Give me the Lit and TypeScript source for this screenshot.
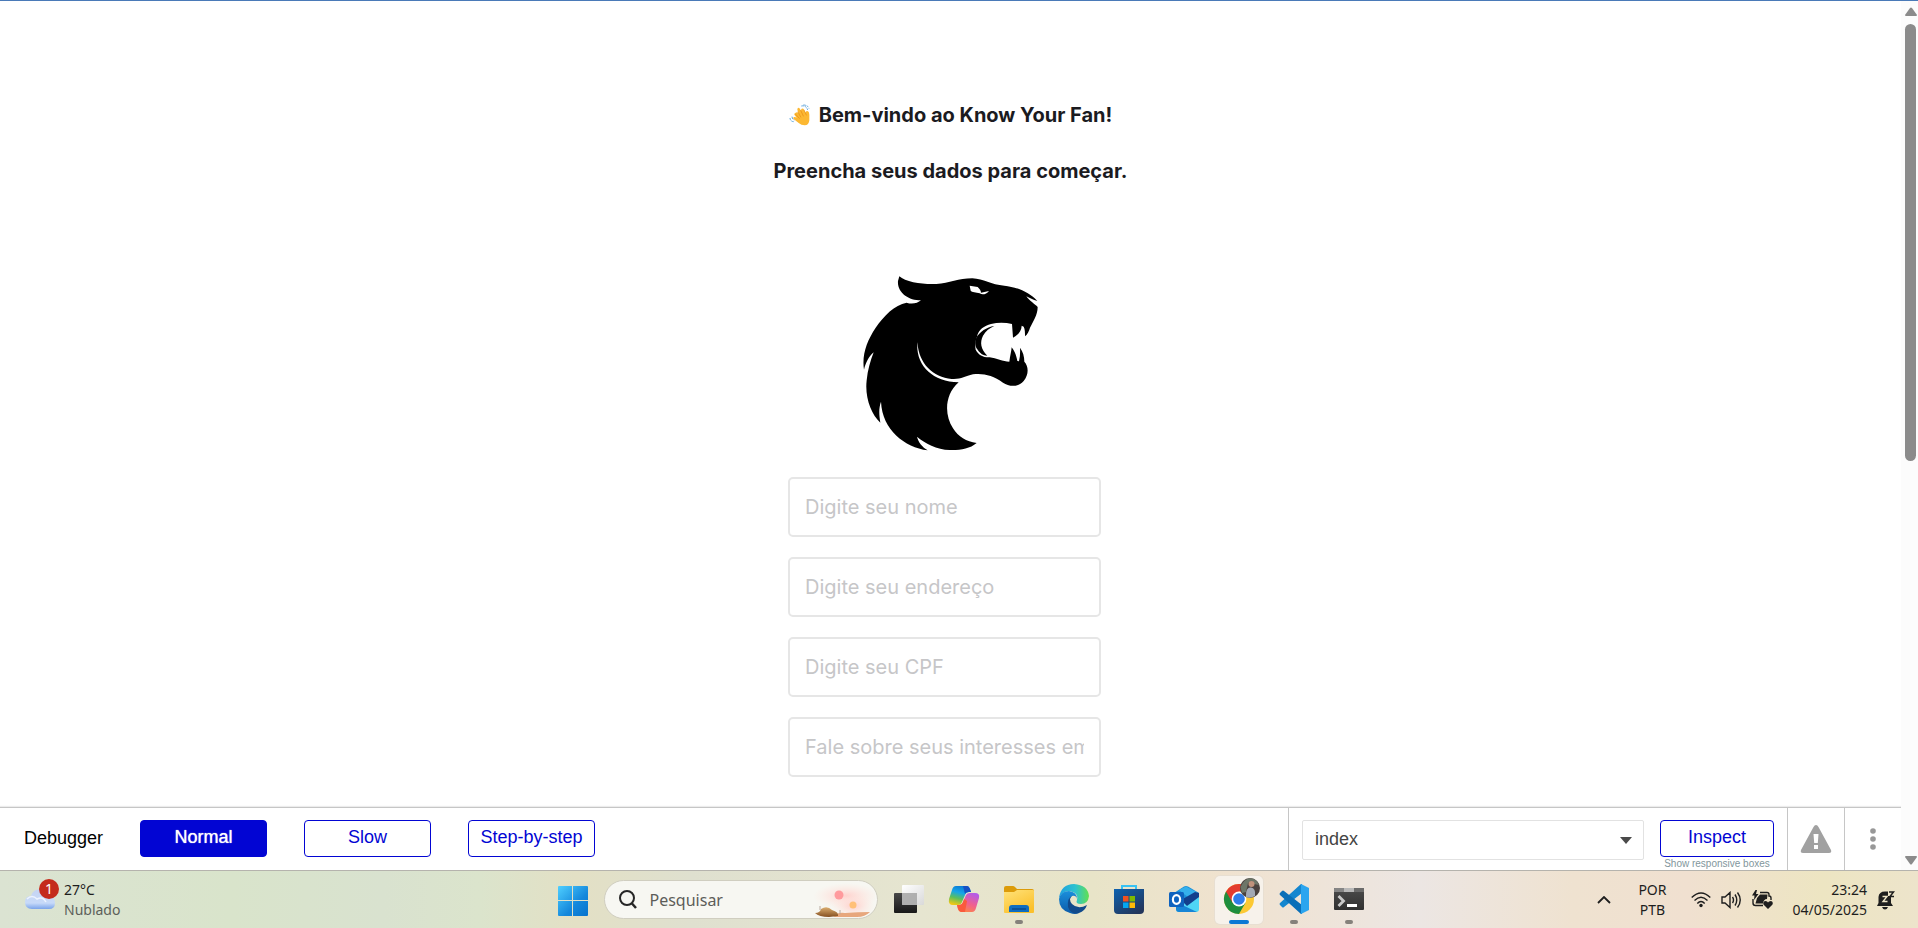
import { LitElement, html, css, svg, nothing } from "lit";
import type { TemplateResult } from "lit";
import { customElement, property, state } from "lit/decorators.js";
import { classMap } from "lit/directives/class-map.js";

@customElement("fan-form")
class FanForm extends LitElement {
  static styles = css`
    :host {
      display: block;
      padding-top: 100px;
      font-family: Inter, sans-serif;
      font-size: 20px;
      overflow: hidden;
    }
    .page {
      display: flex;
      flex-direction: column;
      align-items: center;
    }
    .welcome {
      display: grid;
      gap: 28px;
      justify-items: center;
      color: #1b1b1f;
    }
    .line {
      margin: 0;
      display: flex;
      align-items: center;
      gap: 8px;
      font-size: 20px;
      font-weight: 700;
      line-height: 28px;
    }
    .logo {
      display: block;
      margin: 91px 0 26px;
    }
    .fields {
      display: grid;
      gap: 20px;
      width: 313px;
      margin-right: 12px;
    }
    .field {
      box-sizing: border-box;
      width: 100%;
      height: 60px;
      padding: 0 15px;
      border: 2px solid #e6e6e6;
      border-radius: 5px;
      background: #fff;
      color: #1b1b1f;
      font: inherit;
    }
    .field::placeholder {
      color: #c6c6c8;
      opacity: 1;
    }
  `;

  private fields = [
    "Digite seu nome",
    "Digite seu endereço",
    "Digite seu CPF",
    "Fale sobre seus interesses em e-sports",
  ];

  render() {
    return html`
      <div class="page">
        <div class="welcome">
          <h1 class="line">
            <svg width="22" height="22" viewBox="0 0 66 66" role="img" aria-label="Aceno">
              <path d="M20 26q6-3 9 3l-4-12q0-7 6-5l5 8q0-9 7-6l7 12q1-7 7-4 4 3 4 10v17q-1 15-14 15-10 0-18-7L13 44q-2-6 5-5l5 2-7-9q-1-5 4-6z" fill="#fcb832" />
              <path d="M27 24l8 15M35 19l8 17M45 18l7 15M20 31l11 12" fill="none" stroke="#e58a13" stroke-width="2" stroke-linecap="round" />
              <path d="M37 6q14-3 19 12M43 3q14 0 17 11M3 42q1 11 12 11M9 38q1 8 7 10" fill="none" stroke="#5da4dc" stroke-width="3" stroke-dasharray="7 3" />
            </svg>
            Bem-vindo ao Know Your Fan!
          </h1>
          <p class="line">Preencha seus dados para começar.</p>
        </div>
        <svg class="logo" width="176" height="175" viewBox="40 33 528 525" role="img" aria-label="Know Your Fan">
          <path
            d="M149 34C168 52 222 59 260 57C300 55 326 40 368 40C402 41 424 60 464 62C502 66 540 82 563 108C550 106 540 98 530 94C538 106 556 118 564 126C564 150 550 170 541 188C538 198 534 208 526 214C526 202 526 192 522 185L516 182C516 196 506 210 490 218L487 177C468 173 446 172 424 177C404 182 386 194 382 215C376 230 376 242 378 254C386 270 402 278 420 277C440 280 460 290 479 290C481 274 485 260 486 247C493 256 500 268 503 288L508 289C511 276 512 262 511 248C520 260 524 274 524 290C537 304 538 328 522 348C505 368 478 365 460 353C430 331 400 324 370 328C345 333 334 344 306 342C250 336 208 298 203 232C198 300 246 350 327 352C284 390 284 450 310 490C326 516 350 530 381 534C360 552 330 556 300 555C262 554 225 535 202 515C206 532 218 546 234 556C165 546 98 496 94 410C87 430 88 448 92 473C64 448 45 396 51 346C54 315 62 288 72 262C56 276 48 294 43 314C36 270 52 228 77 190C104 150 134 121 171 113C186 119 204 115 214 106C176 106 142 82 145 48Z"
            fill="#000"
          />
          <path d="M434 183C410 186 390 202 381 216C374 230 376 246 384 254C392 266 400 271 413 272C393 252 390 232 400 212C408 198 420 189 434 183Z" fill="#000" />
          <path d="M360 62L384 66C390 72 394 77 394 83L418 78C410 88 398 91 390 85C380 82 366 82 363 77Z" fill="#fff" />
        </svg>
        <form class="fields" @submit=${(e: Event) => e.preventDefault()}>
          ${this.fields.map(
            (text) => html`<input class="field" type="text" aria-label=${text} placeholder=${text} />`
          )}
        </form>
      </div>
    `;
  }
}

@customElement("debugger-bar")
class DebuggerBar extends LitElement {
  static styles = css`
    :host {
      display: flex;
      justify-content: space-between;
      height: 62px;
      border-top: 1px solid #c6c6c6;
      box-shadow: 0 -1px 1px #ececec;
      background: #fff;
      font-family: "Liberation Sans", Arial, sans-serif;
      font-size: 18px;
      color: #000;
    }
    .modes {
      display: flex;
      align-items: flex-start;
      gap: 37px;
      padding: 12px 24px;
    }
    .title {
      line-height: 36px;
    }
    .button {
      box-sizing: border-box;
      width: 127px;
      height: 37px;
      padding: 0 0 2px;
      border: 1px solid #0205d3;
      border-radius: 4px;
      background: #fff;
      color: #0205d3;
      font: inherit;
      white-space: nowrap;
    }
    .active {
      background: #0205d3;
      color: #fff;
      text-shadow: 0 0 1px #fff;
    }
    .tools {
      display: flex;
    }
    .picker {
      display: flex;
      gap: 16px;
      padding: 12px 13px 0;
      border-left: 1px solid #c6c6c6;
    }
    .select {
      display: grid;
      align-items: center;
      width: 342px;
      height: 40px;
    }
    .select > * {
      grid-area: 1 / 1;
    }
    .native {
      box-sizing: border-box;
      width: 100%;
      height: 40px;
      padding: 0 12px 2px;
      border: 1px solid #e2e2e2;
      border-radius: 2px;
      background: #fff;
      appearance: none;
      color: #444;
      font: inherit;
    }
    .arrow {
      justify-self: end;
      margin-right: 12px;
      pointer-events: none;
    }
    .inspect {
      display: flex;
      flex-direction: column;
      align-items: center;
      width: 114px;
    }
    .inspect .button {
      width: 100%;
    }
    .hint {
      color: #82969c;
      font-size: 10px;
      line-height: 13px;
      white-space: nowrap;
      text-decoration: none;
    }
    .icon {
      display: grid;
      place-items: center;
      box-sizing: border-box;
      width: 57px;
      padding: 0;
      border: 0;
      border-left: 1px solid #c6c6c6;
      background: none;
    }
  `;

  @state() private mode = "Normal";

  render() {
    return html`
      <div class="modes">
        <span class="title">Debugger</span>
        ${["Normal", "Slow", "Step-by-step"].map(
          (mode) => html`<button
            class=${classMap({ button: true, active: this.mode === mode })}
            @click=${() => (this.mode = mode)}
          >${mode}</button>`
        )}
      </div>
      <div class="tools">
        <div class="picker">
          <div class="select">
            <select class="native" aria-label="Página">
              <option>index</option>
            </select>
            <svg class="arrow" width="12" height="7" viewBox="0 0 12 7"><path d="M0 0H12L6 7Z" fill="#4a4a4a" /></svg>
          </div>
          <div class="inspect">
            <button class="button">Inspect</button>
            <a class="hint" href="#">Show responsive boxes</a>
          </div>
        </div>
        <button class="icon" aria-label="Avisos">
          <svg width="32" height="30" viewBox="0 0 32 30">
            <path d="M16 1Q17.500 1 18.500 3L31 26Q32 29 29 29H3Q0 29 1 26L13.500 3Q14.500 1 16 1Z" fill="#a1a1a1" />
            <path d="M13.500 10H18.500L17.800 19H14.200ZM14 21H18V25H14Z" fill="#fff" />
          </svg>
        </button>
        <button class="icon" aria-label="Mais opções">
          <svg width="6" height="22" viewBox="0 0 6 22" fill="#989898">
            <circle cx="3" cy="3" r="2.800" /><circle cx="3" cy="11" r="2.800" /><circle cx="3" cy="19" r="2.800" />
          </svg>
        </button>
      </div>
    `;
  }
}

const taskView = svg`
  <defs>
    <linearGradient id="dark" x2="0" y2="1"><stop stop-color="#484848"/><stop offset="1" stop-color="#181818"/></linearGradient>
    <linearGradient id="light" x2="1" y2="1"><stop stop-color="#fff"/><stop offset="1" stop-color="#d9d9d9"/></linearGradient>
  </defs>
  <rect x="0" y="9" width="23" height="20" rx="1" fill="url(#dark)"/>
  <rect x="8" y="1" width="22" height="20" rx="1" fill="url(#light)"/>
  <path d="M8 9H23V21H8Z" fill="#a5a5a5" opacity=".85"/>`;

const copilot = svg`
  <defs>
    <linearGradient id="c1" x1=".6" x2=".3" y2="1"><stop stop-color="#0a78d4"/><stop offset=".35" stop-color="#16a5e8"/><stop offset=".65" stop-color="#5bbf5c"/><stop offset="1" stop-color="#f3c813"/></linearGradient>
    <linearGradient id="c2" x1=".7" x2=".2" y2="1"><stop stop-color="#b45be8"/><stop offset=".5" stop-color="#f0608f"/><stop offset="1" stop-color="#ff8a3d"/></linearGradient>
  </defs>
  <path d="M7 2H18Q20 2 21 5L22 8H20Q17 8 16 11L13 18Q12 21 9 21H4Q-1 21 0 15L3 6Q4 2 7 2Z" fill="url(#c1)"/>
  <path d="M14 2H18Q20 2 21 5L22 8H20Q17 8 16 10Z" fill="#1650c4"/>
  <path d="M23 28H12Q10 28 9 25L8 21H10Q13 21 14 18L17 11Q18 9 21 9H26Q31 9 30 14L27 24Q26 28 23 28Z" fill="url(#c2)"/>
  <path d="M16 28H12Q10 28 9 25L8 21H10Q13 21 14 18L15 15L18 17Z" fill="#fa5a3c"/>`;

const explorer = svg`
  <defs><linearGradient id="f" x2=".6" y2="1"><stop stop-color="#ffe27a"/><stop offset="1" stop-color="#fbc02b"/></linearGradient></defs>
  <path d="M0 4Q0 2 2 2H9Q10 2 11 3L13 5H28Q30 5 30 7V15H0Z" fill="#dc9b0a"/>
  <path d="M0 8H10L13 6H29Q30 6 30 7V28Q30 29 29 29H1Q0 29 0 28Z" fill="url(#f)"/>
  <path d="M5 28V24Q5 21 8 21H22Q25 21 25 24V28Z" fill="#0f6dc0"/>
  <path d="M8 25H22" stroke="#0a4a8e" stroke-width="1.500"/>`;

const edge = svg`
  <defs>
    <linearGradient id="e1" x1="0" x2="1"><stop stop-color="#1f9fe0"/><stop offset=".55" stop-color="#2ec3cf"/><stop offset="1" stop-color="#62e04f"/></linearGradient>
    <linearGradient id="e2" x1="0" x2="0" y2="1"><stop stop-color="#1a8fdc"/><stop offset="1" stop-color="#0c5aa8"/></linearGradient>
  </defs>
  <path d="M0 14Q2 0 15 0Q29 1 30 12Q29 20 22 20Q16 20 18 16Q20 8 9 7Q3 8 0 14Z" fill="url(#e1)"/>
  <path d="M0 15Q2 7 10 7Q18 8 18 15Q17 11 13 12Q9 15 10 21Q12 28 20 29Q16 31 11 29Q0 26 0 15Z" fill="url(#e2)"/>
  <path d="M13 12Q9 15 13 20Q19 26 28 21Q26 27 20 29Q12 31 9 23Q8 14 13 12Z" fill="#114a8b"/>`;

const store = svg`
  <defs><linearGradient id="s" x2=".7" y2="1"><stop stop-color="#0e62b0"/><stop offset="1" stop-color="#23365c"/></linearGradient></defs>
  <path d="M8 7V2H22V7" fill="none" stroke="#38c2f3" stroke-width="2"/>
  <path d="M0 5H30V26Q30 30 26 30H4Q0 30 0 26Z" fill="url(#s)"/>
  <path d="M9 12H14.500V17.500H9Z" fill="#f2511f"/><path d="M15.500 12H21V17.500H15.500Z" fill="#7fba00"/>
  <path d="M9 18.500H14.500V24H9Z" fill="#05a6f0"/><path d="M15.500 18.500H21V24H15.500Z" fill="#ffba08"/>`;

const outlook = svg`
  <path d="M5 9L15 2.500Q17 1.500 19 2.500L30 9V17H5Z" fill="#1a8fd8"/>
  <path d="M10 6L17 2.500L29 9L20 14Z" fill="#35b0ec"/>
  <path d="M7 20L30 13V25Q30 28 27 28H10Q7 28 7 25Z" fill="#4fd5f5"/>
  <path d="M12 16L26 8L30 9V13L18 22Z" fill="#123f8c"/>
  <path d="M7 18L28 28H10Q7 28 7 25Z" fill="#1785d6"/>
  <rect x="0" y="8" width="15" height="15" rx="1.500" fill="#0f63bf"/>
  <ellipse cx="7.500" cy="15.500" rx="3.600" ry="4.300" fill="none" stroke="#fff" stroke-width="2.200"/>`;

const chrome = svg`
  <circle cx="15" cy="15" r="15" fill="#fcc934"/>
  <path d="M15 15L2 7.500A15 15 0 0 0 15 30L21.500 18.700Z" fill="#1e8e3e"/>
  <path d="M2 7.500A15 15 0 0 1 28 7.500H15L8.500 18.700Z" fill="#e33b2e"/>
  <circle cx="15" cy="15" r="7.400" fill="#fff"/><circle cx="15" cy="15" r="5.800" fill="#2f7de9"/>
  <circle cx="26" cy="4" r="10" fill="#4b423f"/>
  <path d="M16.500 3Q20-5 26-6Q33-5 35 1L30 0L28-3L24-1L22 8L18 9Z" fill="#6d7668"/>
  <circle cx="27.500" cy="0" r="3" fill="#c0927c"/>
  <path d="M22 11Q22 3 27 3.500Q32 4 31 12Q26 15 22 13Z" fill="#a3a9b4"/>`;

const vscode = svg`
  <path d="M22 0L1 19Q0 20 1 21L3 23Q4 24 5 23L23 9V0Z" fill="#1486cf"/>
  <path d="M22 30L1 11Q0 10 1 9L3 7Q4 6 5 7L23 21V30Z" fill="#0a6fb8"/>
  <path d="M22 0L30 4V26L22 30V0Z" fill="#2ba5ef"/>`;

const terminal = svg`
  <defs><linearGradient id="t" x2="0" y2="1"><stop stop-color="#4c4c4c"/><stop offset="1" stop-color="#303030"/></linearGradient></defs>
  <path d="M0 5Q0 4 1 4H29Q30 4 30 5V25Q30 26 29 26H1Q0 26 0 25Z" fill="url(#t)"/>
  <path d="M0 8V5Q0 4 1 4H10V8Z" fill="#858585"/><path d="M10 4H20V8H10Z" fill="#b9b9b9"/><path d="M20 4H29Q30 4 30 5V8H20Z" fill="#6b6b6b"/>
  <path d="M4.500 12L9.500 17L4.500 22" fill="none" stroke="#c9c9c9" stroke-width="2.800"/>
  <path d="M13 20H23V23H13Z" fill="#fff"/>`;

interface App {
  name: string;
  icon: TemplateResult<2>;
  running?: boolean;
  focused?: boolean;
}

const apps: App[] = [
  { name: "Visão de tarefas", icon: taskView },
  { name: "Copilot", icon: copilot },
  { name: "Explorador de Arquivos", icon: explorer, running: true },
  { name: "Edge", icon: edge },
  { name: "Store", icon: store },
  { name: "Outlook", icon: outlook },
  { name: "Chrome", icon: chrome, focused: true },
  { name: "Visual Studio Code", icon: vscode, running: true },
  { name: "Terminal", icon: terminal, running: true },
];

@customElement("taskbar-app")
class TaskbarApp extends LitElement {
  static styles = css`
    :host {
      display: block;
    }
    .tile {
      display: grid;
      grid-template-rows: 1fr auto;
      justify-items: center;
      align-items: center;
      box-sizing: border-box;
      width: 48px;
      height: 48px;
      padding: 3px 0 0;
      border: 0;
      border-radius: 5px;
      background: none;
    }
    .focused {
      background: #f7f2eb;
      box-shadow: 0 0 0 1px #e8dfd2;
    }
    .picture {
      overflow: visible;
    }
    .mark {
      width: 8px;
      height: 4px;
      border-radius: 2px;
    }
    .running .mark {
      background: #85817b;
    }
    .focused .mark {
      width: 20px;
      background: #0c78d4;
    }
  `;

  @property({ attribute: false }) app?: App;

  render() {
    if (!this.app) return nothing;
    const { name, icon, running = false, focused = false } = this.app;
    return html`<button class=${classMap({ tile: true, running, focused })} aria-label=${name}>
      <svg class="picture" width="30" height="30" viewBox="0 0 30 30">${icon}</svg>
      <span class="mark"></span>
    </button>`;
  }
}

@customElement("task-bar")
class TaskBar extends LitElement {
  static styles = css`
    :host {
      display: grid;
      grid-template-columns: 1fr auto 1fr;
      align-items: center;
      height: 57px;
      background: linear-gradient(
        90deg,
        #dbe3d2,
        #d9e4cb 12%,
        #d9e2cf 20%,
        #dbe4cc 25%,
        #e3e0c5 30%,
        #dfe0cf 36%,
        #e6e5d0 48%,
        #e8e4c8 57%,
        #f0e2cf 64%,
        #ece6e3 74%,
        #efe2d0 82%,
        #f0e0d0 88%,
        #ede5c2 95%,
        #ede4cb
      );
      color: #1e1e1e;
      font-family: "Noto Sans", sans-serif;
      font-size: 14px;
      line-height: 20px;
    }
    .weather {
      display: flex;
      align-items: center;
      gap: 5px;
      padding-left: 25px;
    }
    .cloud {
      margin-bottom: 12px;
    }
    .muted {
      color: #5c605a;
    }
    .apps {
      display: flex;
      align-items: center;
      gap: 7px;
      padding-left: 3px;
    }
    .start {
      display: grid;
      place-items: center;
      width: 48px;
      height: 48px;
      padding: 3px 0 0;
      border: 0;
      background: none;
    }
    .search {
      display: flex;
      align-items: center;
      gap: 13px;
      box-sizing: border-box;
      width: 274px;
      height: 39px;
      padding: 0 2px 0 14px;
      border: 1px solid #d0cec0;
      border-radius: 20px;
      background: #f7f7f2;
    }
    .query {
      flex: 1;
      min-width: 0;
      padding: 0;
      border: 0;
      background: none;
      font: inherit;
      font-size: 16px;
    }
    .query::placeholder {
      color: #5d5d59;
      opacity: 1;
    }
    .tray {
      display: flex;
      justify-content: flex-end;
      align-items: center;
      gap: 10px;
      padding-right: 23px;
      white-space: nowrap;
    }
    .language {
      margin: 0 14px 0 17px;
      text-align: center;
    }
    .clock {
      margin-left: 10px;
      text-align: right;
    }
  `;

  render() {
    return html`
      <div class="weather">
        <svg class="cloud" width="34" height="30" viewBox="0 0 34 30">
          <defs><linearGradient id="cloud" x2="0" y2="1"><stop stop-color="#c6d4f2" /><stop offset=".7" stop-color="#c7daf9" /><stop offset="1" stop-color="#7ba4ea" /></linearGradient></defs>
          <path d="M7 30Q0 30 0 23Q0 17 6 17Q8 10 16 10Q25 10 25 17Q30 18 30 24Q30 30 24 30Z" fill="url(#cloud)" />
          <path d="M2 20Q7 15 12 20Q18 17 21 23" fill="none" stroke="#edf3ff" stroke-width="1.500" />
          <circle cx="24" cy="10" r="10" fill="#c42b1c" />
          <text x="24" y="15" text-anchor="middle" font-size="14" fill="#fff">1</text>
        </svg>
        <div>
          <div>27°C</div>
          <div class="muted">Nublado</div>
        </div>
      </div>

      <div class="apps">
        <button class="start" aria-label="Iniciar">
          <svg width="30" height="30" viewBox="0 0 30 30">
            <defs><linearGradient id="win" x2="1" y2="1"><stop stop-color="#4fcfff" /><stop offset=".6" stop-color="#1488dc" /><stop offset="1" stop-color="#0672cd" /></linearGradient></defs>
            <path d="M0 1Q0 0 1 0H14V14H0ZM15 0H29Q30 0 30 1V14H15ZM0 15H14V30H1Q0 30 0 29ZM15 15H30V29Q30 30 29 30H15Z" fill="url(#win)" />
          </svg>
        </button>
        <label class="search">
          <svg width="18" height="19" viewBox="0 0 18 19" fill="none" stroke="#262626">
            <circle cx="8" cy="8" r="7" stroke-width="2" /><path d="M12.500 13L17 18" stroke-width="2.500" />
          </svg>
          <input class="query" type="text" placeholder="Pesquisar" aria-label="Pesquisar" />
          <svg width="62" height="34" viewBox="0 0 62 34">
            <defs>
              <radialGradient id="glow"><stop stop-color="#ffd0cc" /><stop offset="1" stop-color="#ffe6df" stop-opacity="0" /></radialGradient>
              <linearGradient id="sand" x2="0" y2="1"><stop stop-color="#dcae70" /><stop offset="1" stop-color="#855022" /></linearGradient>
            </defs>
            <ellipse cx="33" cy="13" rx="33" ry="13" fill="url(#glow)" />
            <ellipse cx="40" cy="23" rx="22" ry="12" fill="url(#glow)" />
            <circle cx="26" cy="12" r="4.500" fill="#ff9a9d" />
            <circle cx="40" cy="22" r="3.500" fill="#ffc078" />
            <path d="M22 33Q24 29 32 30Q45 29 57 29Q52 34 44 34H20Z" fill="#e7a77d" />
            <path d="M2 30Q7 30 8 26Q14 22 19 27Q26 29 25 33L16 34Q6 34 2 30Z" fill="url(#sand)" />
            <path d="M7 23V27M27 27V31" stroke="#b9aaa0" />
          </svg>
        </label>
        ${apps.map((app) => html`<taskbar-app .app=${app}></taskbar-app>`)}
      </div>

      <div class="tray">
        <svg width="14" height="8" viewBox="0 0 14 8"><path d="M1 7L7 1L13 7" fill="none" stroke="#1e1e1e" stroke-width="1.800" /></svg>
        <div class="language">
          <div>POR</div>
          <div>PTB</div>
        </div>
        <svg width="20" height="16" viewBox="0 0 20 16" fill="none" stroke="#1e1e1e" stroke-width="1.400">
          <path d="M.7 5.500Q10-3.500 19.300 5.500M3.500 8.500Q10 2 16.500 8.500M6.300 11.500Q10 7.500 13.700 11.500" />
          <circle cx="10" cy="13.500" r="1.700" fill="#1e1e1e" stroke="none" />
        </svg>
        <svg width="21" height="18" viewBox="0 0 21 18" fill="none" stroke="#1e1e1e" stroke-width="1.400">
          <path d="M1 6H4L9 1.500V16.500L4 12H1ZM11.500 6Q13.500 9 11.500 12M14 3.500Q17.500 9 14 14.500M16.500 1.500Q22 9 16.500 16.500" />
        </svg>
        <svg width="21" height="19" viewBox="0 0 21 19">
          <path d="M8 2.500H15Q17 2.500 17 4.500V6Q19 6 19 8V10M1 9V13Q1 15.500 3.500 15.500H11" fill="none" stroke="#1e1e1e" stroke-width="1.400" />
          <path d="M3.500 0L0 5.500H2.500L2 10L6.500 4H4L5 0Z" fill="#1e1e1e" />
          <path d="M8 4.500H15.500L15 9Q11.500 9 11 13.500H3.500L5 8Z" fill="#1e1e1e" />
          <path d="M16 19L11.500 14.500Q10.500 11 13.500 11Q15.500 11 16 12.500Q16.500 11 19 11Q21.500 11.500 20.500 14.500Z" fill="#1e1e1e" />
        </svg>
        <div class="clock">
          <div>23:24</div>
          <div>04/05/2025</div>
        </div>
        <svg width="18" height="20" viewBox="0 0 18 20">
          <path d="M1.500 7Q2 1.500 8 1.500H11V6H14V13L16 16H0L1.500 13ZM5 17H11Q10 19.500 8 19.500Q6 19.500 5 17Z" fill="#1e1e1e" />
          <path d="M5.500 6.500H10L6 11.500H10.500" fill="none" stroke="#eee5c8" stroke-width="1.400" />
          <path d="M12 2H16.500L13 6.500H17" fill="none" stroke="#1e1e1e" stroke-width="1.500" />
        </svg>
      </div>
    `;
  }
}

@customElement("app-root")
class AppRoot extends LitElement {
  static styles = css`
    :host {
      display: flex;
      flex-direction: column;
      height: 100vh;
      overflow: hidden;
      background: #fff;
    }
    .window {
      flex: 1;
      min-height: 0;
      display: grid;
      grid-template-columns: minmax(0, 1fr) 17px;
      box-sizing: border-box;
      border-top: 1px solid #4a7ab8;
      border-bottom: 1px solid #b5b3ad;
    }
    .view {
      display: grid;
      grid-template-rows: minmax(0, 1fr) auto;
      min-height: 0;
    }
    .scroll {
      display: flex;
      flex-direction: column;
      align-items: flex-end;
      padding: 6px 1px 5px 0;
      background: #fcfcfc;
    }
    .track {
      flex: 1;
      width: 12px;
      padding: 8px 0;
    }
    .thumb {
      width: 11px;
      height: 53%;
      border-radius: 6px;
      background: #8b8b8b;
    }
  `;

  render() {
    return html`
      <main class="window">
        <div class="view">
          <fan-form></fan-form>
          <debugger-bar></debugger-bar>
        </div>
        <div class="scroll">
          <svg width="12" height="9" viewBox="0 0 12 9"><path d="M5 1Q6 0 7 1L12 8Q12 9 11 9H1Q0 9 0 8Z" fill="#8b8b8b" /></svg>
          <div class="track"><div class="thumb"></div></div>
          <svg width="12" height="9" viewBox="0 0 12 9"><path d="M5 8Q6 9 7 8L12 1Q12 0 11 0H1Q0 0 0 1Z" fill="#8b8b8b" /></svg>
        </div>
      </main>
      <task-bar></task-bar>
    `;
  }
}
